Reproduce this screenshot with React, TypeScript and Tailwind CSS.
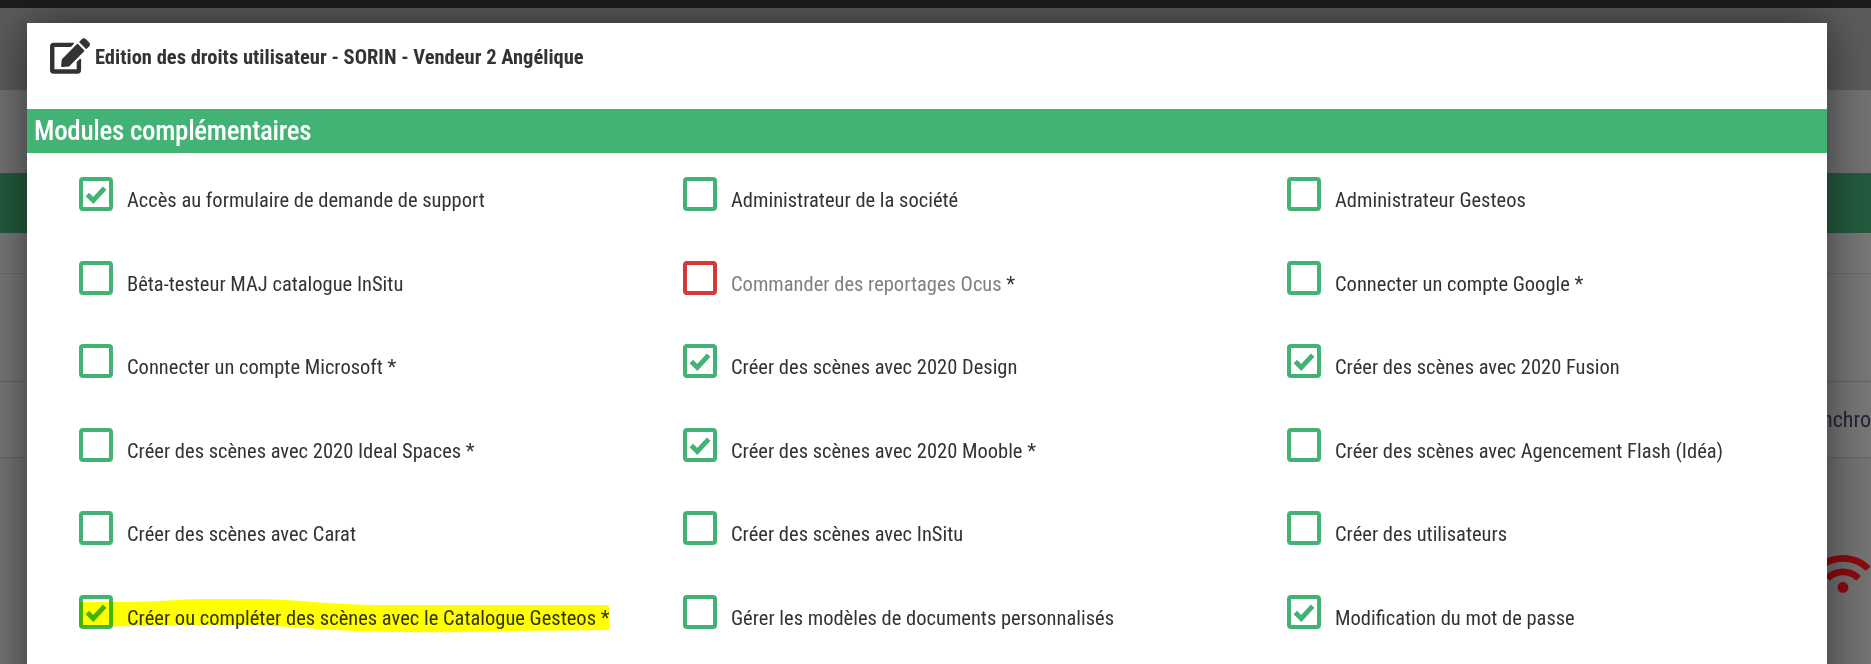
import { FaEdit, FaWifi } from "react-icons/fa";

type Right = {
  label: string;
  checked?: boolean;
  disabled?: boolean;
  star?: boolean;
};

const rights: Right[] = [
  { label: "Accès au formulaire de demande de support", checked: true },
  { label: "Administrateur de la société" },
  { label: "Administrateur Gesteos" },
  { label: "Bêta-testeur MAJ catalogue InSitu" },
  { label: "Commander des reportages Ocus", disabled: true, star: true },
  { label: "Connecter un compte Google", star: true },
  { label: "Connecter un compte Microsoft", star: true },
  { label: "Créer des scènes avec 2020 Design", checked: true },
  { label: "Créer des scènes avec 2020 Fusion", checked: true },
  { label: "Créer des scènes avec 2020 Ideal Spaces", star: true },
  { label: "Créer des scènes avec 2020 Mooble", checked: true, star: true },
  { label: "Créer des scènes avec Agencement Flash (Idéa)" },
  { label: "Créer des scènes avec Carat" },
  { label: "Créer des scènes avec InSitu" },
  { label: "Créer des utilisateurs" },
  { label: "Créer ou compléter des scènes avec le Catalogue Gesteos", checked: true, star: true },
  { label: "Gérer les modèles de documents personnalisés" },
  { label: "Modification du mot de passe", checked: true },
];

const Row = ({ right }: { right: Right }) => (
  <div className="flex items-start h-[83.5px]">
    <div
      className={
        "w-[34px] h-[34px] rounded-[4px] border-4 bg-white flex items-center justify-center shrink-0 " +
        (right.disabled ? "border-[#d33a35]" : "border-[#42b375]")
      }
    >
      {right.checked && (
        <svg viewBox="0 0 24 24" className="w-[26px] h-[26px]" fill="none" stroke="#42b375" strokeWidth="4.5">
          <path d="M4 12.5l5.5 5.5L20 6.5" />
        </svg>
      )}
    </div>
    <span className={"ml-[14px] mt-[10px] text-[20.5px] leading-[26px] whitespace-nowrap " + (right.disabled ? "text-[#808080]" : "text-[#333333]")}>
      {right.label}
      {right.star && <span className="text-[#333333]"> *</span>}
    </span>
  </div>
);

export default function App() {
  return (
    <div className="relative w-[1871px] h-[664px] overflow-hidden bg-[#747474] font-['Roboto',sans-serif] [font-stretch:85%]">
      <div className="h-[8px] bg-[#1d1d1d]" />
      <div className="h-[82px] bg-[#5c5c5c]" />
      <div className="h-[83px] bg-[#737373]" />
      <div className="h-[60px] bg-[#245c3e]" />
      <div className="h-[41px] bg-[#787878] border-b border-[#6c6c6c]" />
      <div className="h-[108px] bg-[#787878] border-b border-[#666666]" />
      <div className="h-[76px] bg-[#787878] border-b border-[#666666] flex items-center justify-end">
        <span className="text-[22px] text-[#25253a] whitespace-nowrap">nchro</span>
      </div>
      <div className="h-[89px]" />
      <div className="flex justify-end pr-[1px]">
        <FaWifi className="text-[#8f0a0e] w-[54px] h-[54px]" />
      </div>

      <div className="absolute left-[27px] top-[23px] w-[1800px] h-[700px] bg-white shadow-[0_0_45px_rgba(0,0,0,0.55)]">
        <div className="h-[86px] flex items-start pl-[23px] pt-[15px]">
          <FaEdit className="w-[40px] h-[36px] text-[#333333]" />
          <h4 className="ml-[5px] mt-[6px] text-[20.5px] leading-[26px] font-bold text-[#333333] whitespace-nowrap">
            Edition des droits utilisateur - SORIN - Vendeur 2 Angélique
          </h4>
        </div>
        <div className="h-[44px] bg-[#42b375] text-white text-[27px] font-medium tracking-[-0.3px] leading-[44px] pl-[7px]">
          Modules complémentaires
        </div>
        <div className="grid grid-cols-[repeat(3,604px)] pl-[52px] pt-[24px] relative">
          {rights.map((r) => (
            <Row key={r.label} right={r} />
          ))}
          <svg
            className="absolute left-[52px] top-[440px] mix-blend-multiply pointer-events-none"
            width="560"
            height="60"
            viewBox="0 0 560 60"
          >
            <path
              d="M-1 9 L50 9 C80 9 100 6 125 6 L185 6 C220 7 260 12 300 12 L530 12 L530 37 L430 38 C360 40 300 40 240 36 C200 32 160 32 120 32 L-1 34 Z"
              fill="#ffff00"
            />
          </svg>
        </div>
      </div>
    </div>
  );
}
